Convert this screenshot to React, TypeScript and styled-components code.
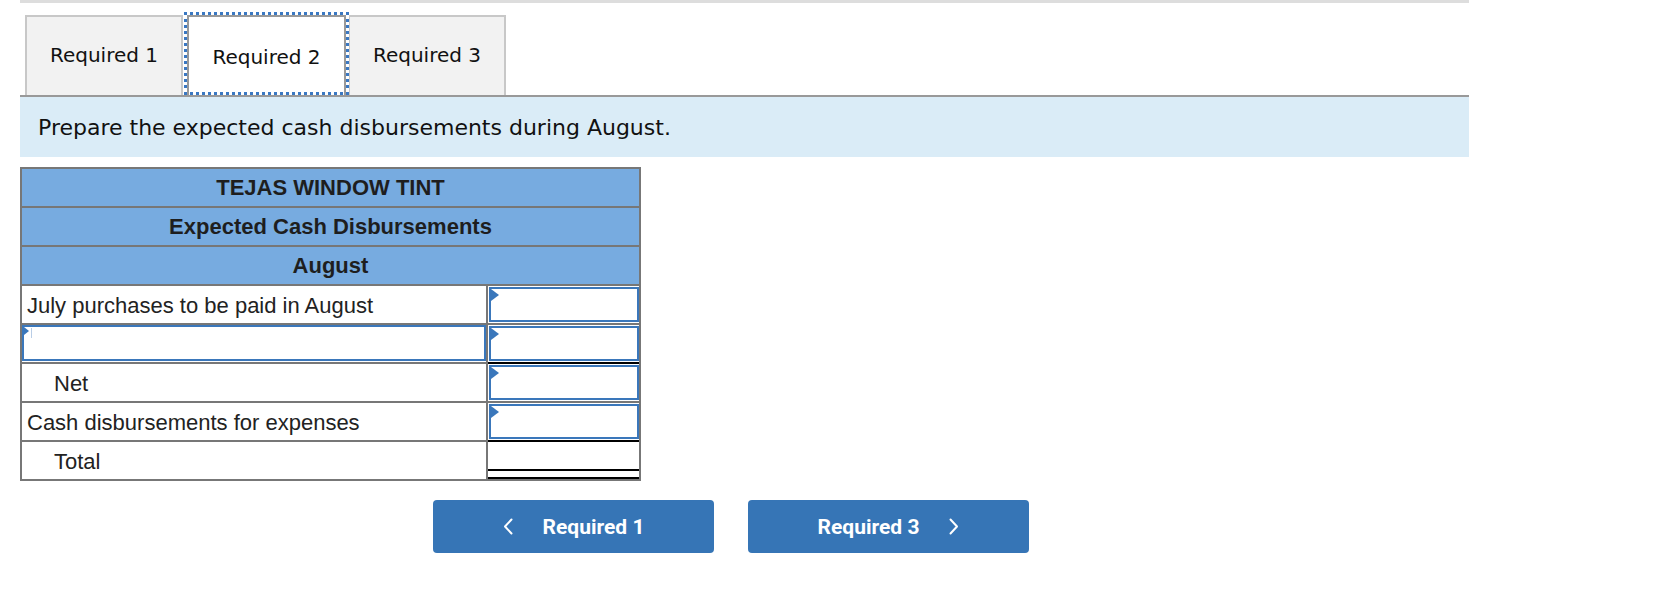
import React from "react";
import styled, { createGlobalStyle } from "styled-components";

const GlobalStyle = createGlobalStyle`
  html, body { margin: 0; padding: 0; background: #ffffff; }
  * { box-sizing: border-box; }
`;

const Page = styled.div`
  width: 1469px;
  padding-left: 20px;
`;

const TopRule = styled.div`
  height: 3px;
  background: #dddddd;
`;

const TabBar = styled.div`
  display: flex;
  align-items: flex-end;
  padding-left: 5px;
  margin-top: 9px;
  height: 83px;
`;

const Tab = styled.div<{ $active?: boolean }>`
  height: ${(p) => (p.$active ? "83px" : "80px")};
  width: ${(p) => (p.$active ? "165px" : "158px")};
  margin-left: ${(p) => (p.$active ? "1px" : "0")};
  margin-right: ${(p) => (p.$active ? "-1px" : "0")};
  display: flex;
  align-items: center;
  justify-content: center;
  font-family: "DejaVu Sans", Verdana, sans-serif;
  font-size: 20px;
  color: #111;
  background: ${(p) => (p.$active ? "#ffffff" : "#f2f2f2")};
  border: ${(p) => (p.$active ? "none" : "2px solid #c8c8c8")};
  border-bottom: none;
  outline: ${(p) => (p.$active ? "3px dotted #3a78c2" : "none")};
  outline-offset: -3px;
  box-shadow: ${(p) => (p.$active ? "inset 3px 3px 0 0 #fff, inset -3px 0 0 0 #fff, inset 5px 5px 0 0 #999, inset -5px 0 0 0 #999" : "none")};
  padding-top: ${(p) => (p.$active ? "7px" : "0")};
  padding-bottom: ${(p) => (p.$active ? "0" : "2px")};
  position: relative;
  z-index: ${(p) => (p.$active ? 1 : 0)};
`;

const PromptBox = styled.div`
  border-top: 2px solid #999999;
  background: #daecf7;
  height: 62px;
  display: flex;
  align-items: center;
  padding-left: 18px;
  font-family: "DejaVu Sans", Verdana, sans-serif;
  font-size: 22px;
  color: #111;
`;

const Sheet = styled.div`
  margin-top: 10px;
  width: 621px;
  border: 2px solid #777777;
  font-family: "Liberation Sans", Arial, sans-serif;
  font-size: 22px;
  color: #222;
`;

const HeaderRow = styled.div<{ $first?: boolean }>`
  height: ${(p) => (p.$first ? "37px" : "39px")};
  border-top: ${(p) => (p.$first ? "none" : "2px solid #777777")};
  background: #77abe0;
  display: flex;
  align-items: center;
  justify-content: center;
  font-weight: bold;
  color: #1e1e1e;
`;

const Row = styled.div`
  display: grid;
  grid-template-columns: 466px 1fr;
  height: 39px;
`;

const LabelCell = styled.div<{ $indent?: boolean }>`
  border-top: 2px solid #777777;
  border-right: 2px solid #777777;
  display: flex;
  align-items: center;
  padding-left: ${(p) => (p.$indent ? "32px" : "5px")};
  padding-top: 3px;
`;

const ValueCell = styled.div<{ $topRule?: boolean; $double?: boolean }>`
  border-top: ${(p) => (p.$topRule ? "2px solid #000" : "2px solid #777777")};
  position: relative;
  padding: 1px 0 1px 1px;
  display: flex;
  ${(p) =>
    p.$double
      ? `&::after {
    content: "";
    position: absolute;
    left: 0;
    right: 0;
    bottom: 0;
    height: 6px;
    border-top: 2px solid #000;
    border-bottom: 2px solid #000;
  }`
      : ""}
`;

const Field = styled.div`
  flex: 1;
  border: 2px solid #3a77bb;
  background: #fff;
  position: relative;
`;

const Marker = styled.span`
  position: absolute;
  left: 0;
  top: 0;
  width: 0;
  height: 0;
  border-top: 6px solid transparent;
  border-bottom: 6px solid transparent;
  border-left: 8px solid #3a77bb;
`;

const SmallMarker = styled(Marker)`
  border-top-width: 4px;
  border-bottom-width: 4px;
  border-left-width: 5px;
`;

const Caret = styled.span`
  position: absolute;
  left: 7px;
  top: 1px;
  width: 1px;
  height: 10px;
  background: #b9cde6;
`;

const LabelFieldCell = styled.div`
  border-top: 2px solid #777777;
  border-right: 2px solid #777777;
  display: flex;
  padding: 0 0 1px 0;
`;

const Nav = styled.div`
  display: flex;
  gap: 34px;
  margin-top: 19px;
  margin-left: 413px;
`;

const NavButton = styled.button`
  width: 281px;
  height: 53px;
  border: none;
  border-radius: 4px;
  background: #3675b6;
  color: #ffffff;
  font-family: Roboto, "Open Sans", sans-serif;
  font-weight: 700;
  font-size: 21px;
  display: flex;
  align-items: center;
  justify-content: center;
  gap: 30px;
  padding: 0;
`;

const Chevron = ({ dir }: { dir: "left" | "right" }) => (
  <svg width="10" height="17" viewBox="0 0 10 17" fill="none">
    <polyline
      points={dir === "left" ? "8.5,1.5 2,8.5 8.5,15.5" : "1.5,1.5 8,8.5 1.5,15.5"}
      stroke="#ffffff"
      strokeWidth="2"
      strokeLinecap="round"
      strokeLinejoin="round"
    />
  </svg>
);

export default function App() {
  return (
    <Page>
      <GlobalStyle />
      <TopRule />
      <TabBar>
        <Tab>Required 1</Tab>
        <Tab $active>Required 2</Tab>
        <Tab>Required 3</Tab>
      </TabBar>
      <PromptBox>Prepare the expected cash disbursements during August.</PromptBox>
      <Sheet>
        <HeaderRow $first>TEJAS WINDOW TINT</HeaderRow>
        <HeaderRow>Expected Cash Disbursements</HeaderRow>
        <HeaderRow>August</HeaderRow>
        <Row>
          <LabelCell>July purchases to be paid in August</LabelCell>
          <ValueCell>
            <Field>
              <Marker />
            </Field>
          </ValueCell>
        </Row>
        <Row>
          <LabelFieldCell>
            <Field>
              <SmallMarker />
              <Caret />
            </Field>
          </LabelFieldCell>
          <ValueCell>
            <Field>
              <Marker />
            </Field>
          </ValueCell>
        </Row>
        <Row>
          <LabelCell $indent>Net</LabelCell>
          <ValueCell $topRule>
            <Field>
              <Marker />
            </Field>
          </ValueCell>
        </Row>
        <Row>
          <LabelCell>Cash disbursements for expenses</LabelCell>
          <ValueCell>
            <Field>
              <Marker />
            </Field>
          </ValueCell>
        </Row>
        <Row>
          <LabelCell $indent>Total</LabelCell>
          <ValueCell $topRule $double />
        </Row>
      </Sheet>
      <Nav>
        <NavButton>
          <Chevron dir="left" />
          Required 1
        </NavButton>
        <NavButton>
          Required 3
          <Chevron dir="right" />
        </NavButton>
      </Nav>
    </Page>
  );
}
